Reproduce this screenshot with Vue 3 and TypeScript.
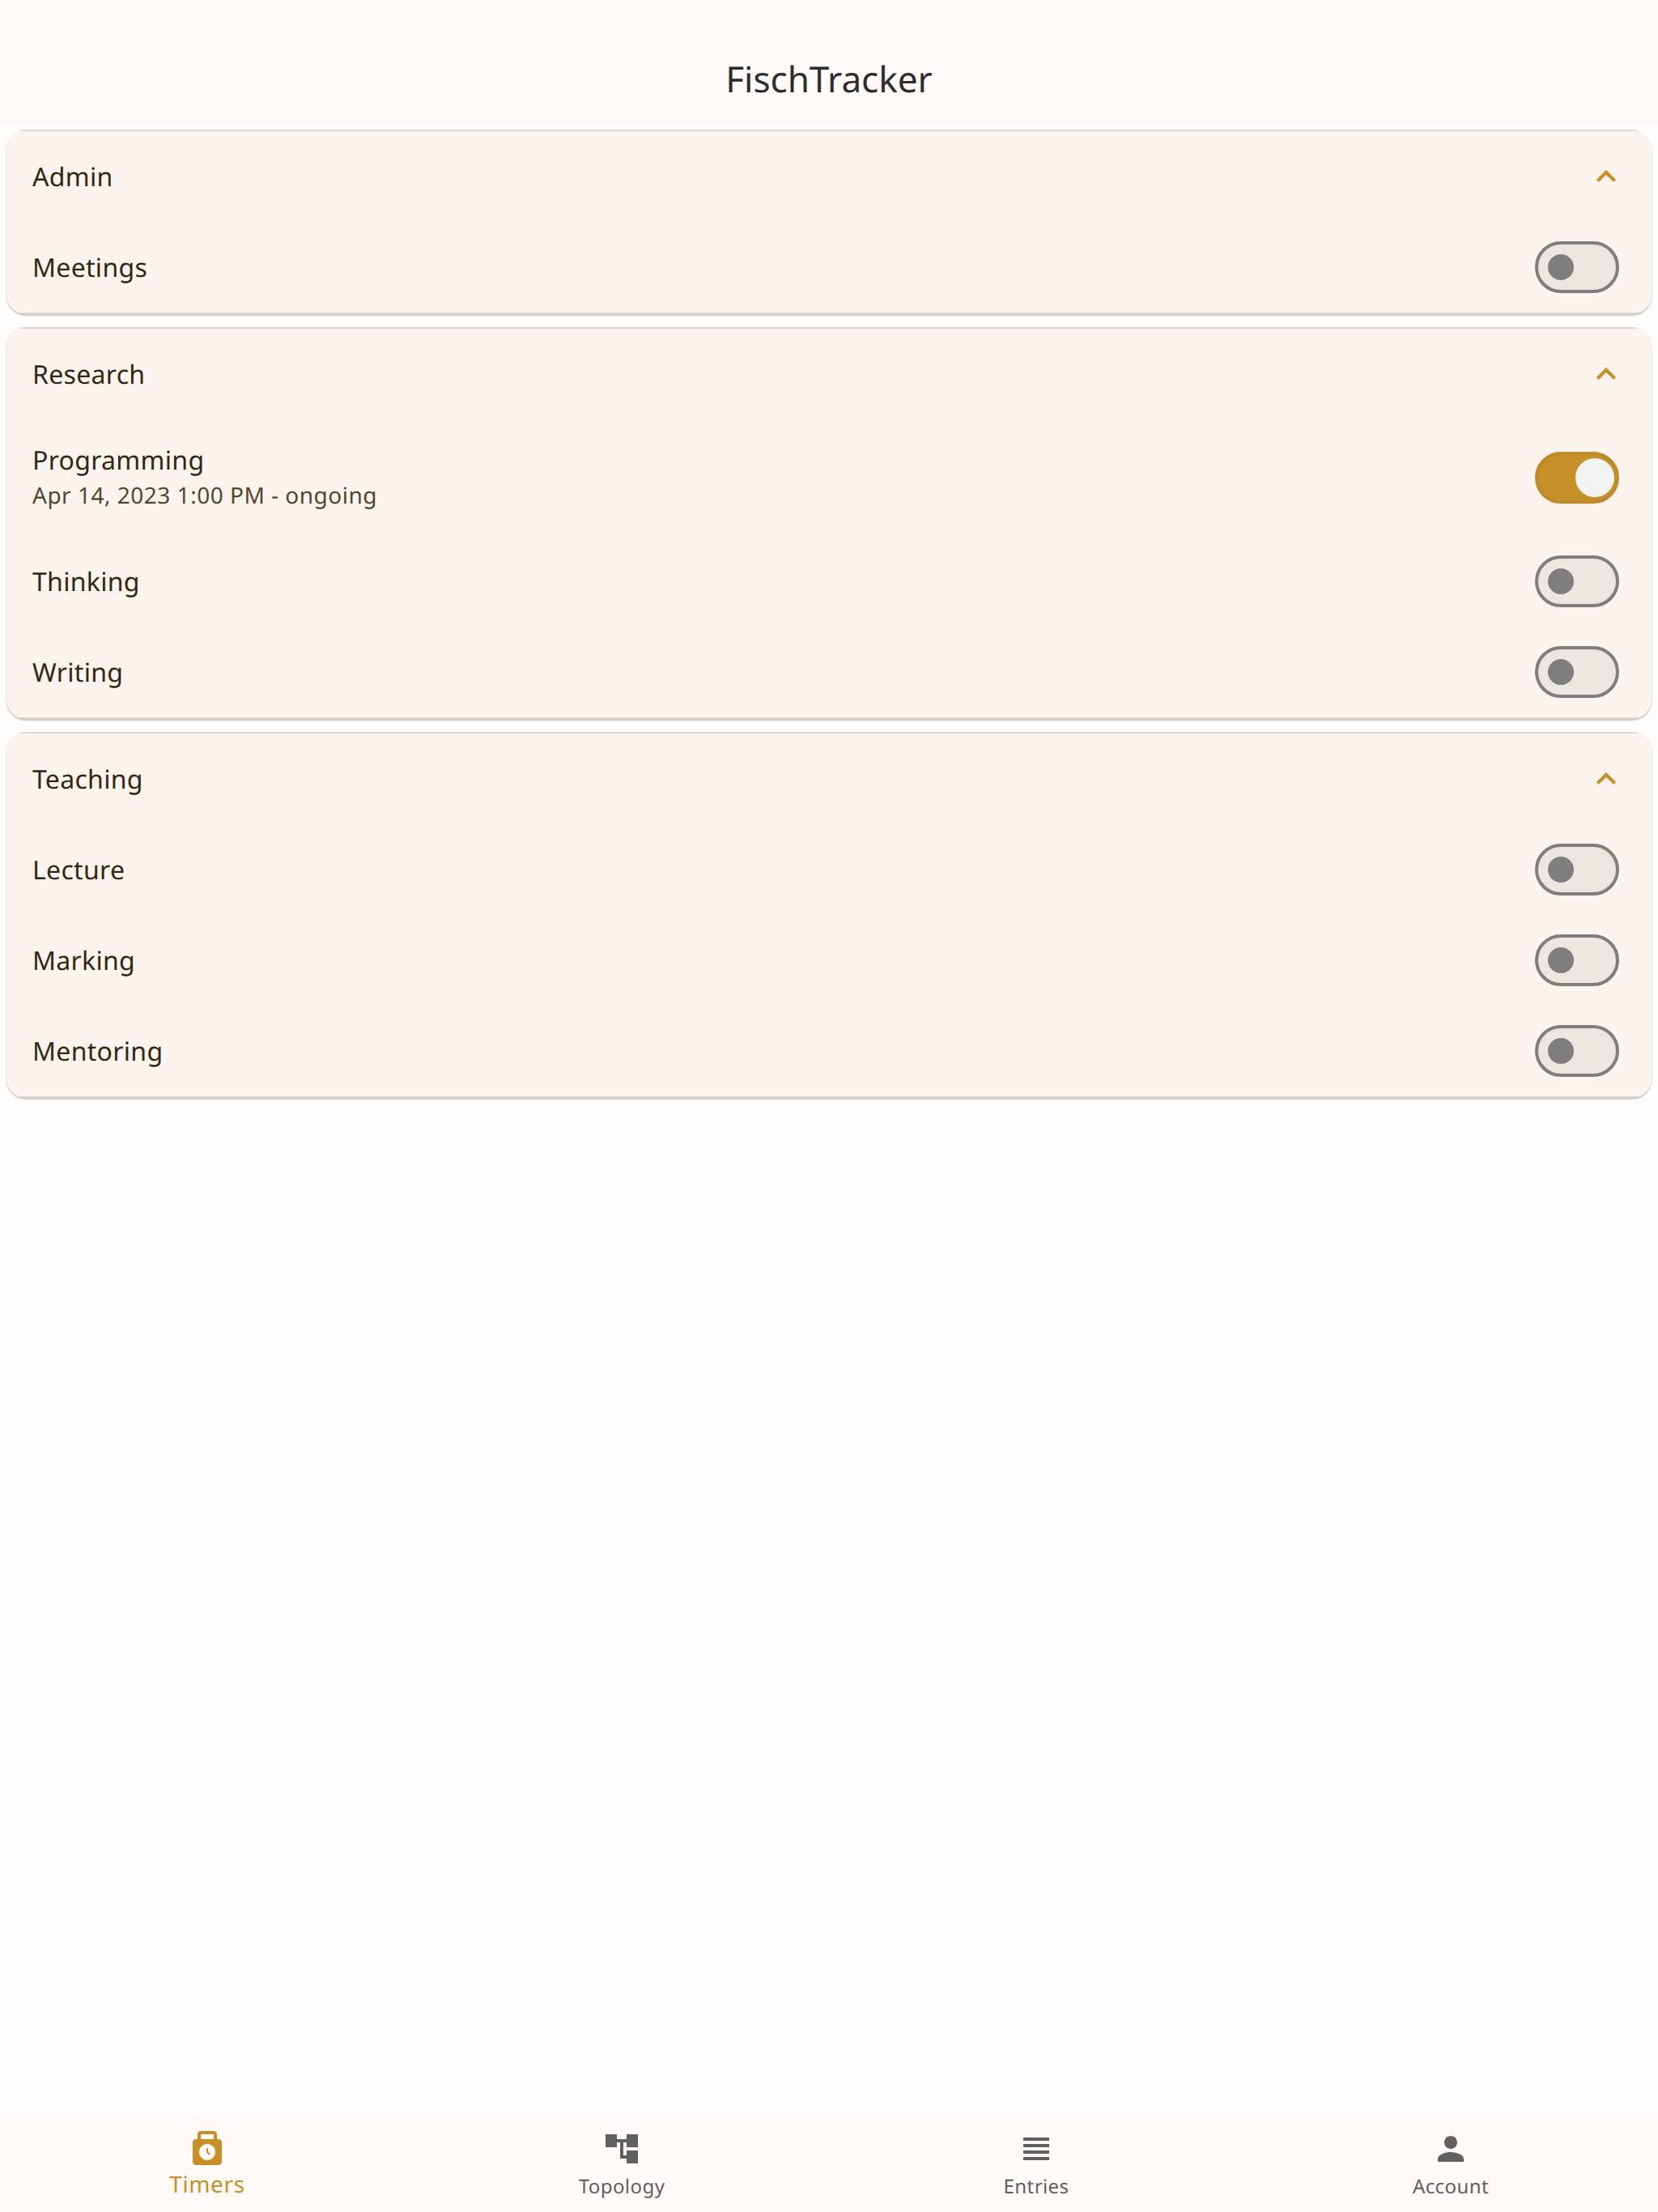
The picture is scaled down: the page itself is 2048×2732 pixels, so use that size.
<script setup lang="ts">
import { ref } from 'vue'

interface Timer {
  name: string
  running?: string
}
interface Group {
  title: string
  timers: Timer[]
}

const groups = ref<Group[]>([
  { title: 'Admin', timers: [{ name: 'Meetings' }] },
  {
    title: 'Research',
    timers: [
      { name: 'Programming', running: 'Apr 14, 2023 1:00 PM - ongoing' },
      { name: 'Thinking' },
      { name: 'Writing' },
    ],
  },
  {
    title: 'Teaching',
    timers: [{ name: 'Lecture' }, { name: 'Marking' }, { name: 'Mentoring' }],
  },
])

const tabs = [
  {
    label: 'Timers',
    icon: 'M19 6h-1V3c0-1.100-.9-2-2-2H8c-1.100 0-2 .9-2 2v3H5c-1.100 0-2 .9-2 2v12c0 1.100.9 2 2 2h14c1.100 0 2-.9 2-2V8c0-1.100-.9-2-2-2zM8 3h8v3H8V3zm4 16c-2.760 0-5-2.240-5-5s2.240-5 5-5 5 2.240 5 5-2.240 5-5 5zM12.500 11.500h-1v2.700l1.650 1.650.7-.7-1.350-1.350z',
  },
  { label: 'Topology', icon: 'M22 11V3h-7v3H9V3H2v8h7V8h2v10h4v3h7v-8h-7v3h-2V8h2v3z' },
  { label: 'Entries', icon: 'M4 15h16v-2H4v2zm0 4h16v-2H4v2zm0-8h16V9H4v2zm0-6v2h16V5H4z' },
  {
    label: 'Account',
    icon: 'M12 12c2.210 0 4-1.790 4-4s-1.790-4-4-4-4 1.790-4 4 1.790 4 4 4zm0 2c-2.670 0-8 1.340-8 4v2h16v-2c0-2.660-5.330-4-8-4z',
  },
]
const active = ref('Timers')
</script>

<template>
  <div class="screen">
    <header class="bar">
      <h1>FischTracker</h1>
    </header>
    <main class="content">
      <section v-for="g in groups" :key="g.title" class="card">
        <div class="row">
          <div class="texts">
            <span class="name">{{ g.title }}</span>
          </div>
          <svg class="chevron" viewBox="0 0 24 24">
            <path d="M12 8l-6 6 1.410 1.410L12 10.830l4.590 4.580L18 14z" />
          </svg>
        </div>
        <div v-for="t in g.timers" :key="t.name" class="row" :class="{ tall: t.running }">
          <div class="texts">
            <span class="name">{{ t.name }}</span>
            <span v-if="t.running" class="sub">{{ t.running }}</span>
          </div>
          <span class="switch" :class="{ on: t.running }"><i></i></span>
        </div>
      </section>
    </main>
    <nav class="nav">
      <div v-for="t in tabs" :key="t.label" class="tab" :class="{ active: t.label === active }">
        <svg viewBox="0 0 24 24"><path fill-rule="evenodd" :d="t.icon" /></svg>
        <span>{{ t.label }}</span>
      </div>
    </nav>
  </div>
</template>

<style>
body {
  margin: 0;
}
</style>

<style scoped>
.screen {
  display: flex;
  flex-direction: column;
  height: 100vh;
  background: #fffdfb;
  font-family: 'Noto Sans', sans-serif;
  text-rendering: geometricPrecision;
}
.bar {
  display: flex;
  box-sizing: border-box;
  height: 152px;
  padding-top: 42px;
  align-items: center;
  justify-content: center;
  background: #fffaf7;
}
h1 {
  margin: 0;
  font-size: 44px;
  font-weight: 400;
  line-height: 56px;
  color: #2d2d2c;
}
.content {
  display: flex;
  flex: 1;
  flex-direction: column;
  gap: 16px;
  padding: 8px;
}
.card {
  /* hairlines run straight and are clipped by the rounded corners */
  padding: 2px 0;
  border-radius: 24px;
  background:
    linear-gradient(#ddd5cd, #ddd5cd) top / 100% 2px no-repeat,
    linear-gradient(#ddd5cd, #ddd5cd) bottom / 100% 2px no-repeat,
    #fbf3ed;
  box-shadow: 0 2px 2px rgba(0, 0, 0, 0.19), 0 1px 3px rgba(0, 0, 0, 0.06);
}
.row {
  display: flex;
  height: 112px;
  padding: 0 40px 0 32px;
  align-items: center;
  justify-content: space-between;
}
.row.tall {
  height: 144px;
}
.texts {
  display: flex;
  flex-direction: column;
  padding-top: 2px;
}
.tall .texts {
  margin-bottom: 5px;
}
.name {
  font-size: 32px;
  line-height: 48px;
  letter-spacing: 0.3px;
  color: #322711;
}
.sub {
  margin-top: -1px;
  font-size: 28px;
  line-height: 40px;
  letter-spacing: 0.5px;
  color: #52462f;
}
.chevron {
  width: 48px;
  height: 48px;
  margin-right: -8px;
  fill: #c78f24;
  stroke: #c78f24;
  stroke-width: 0.15;
}
.switch {
  display: flex;
  box-sizing: border-box;
  width: 104px;
  height: 64px;
  padding-left: 12px;
  align-items: center;
  border: 4px solid #7e7e7e;
  border-radius: 32px;
  background: #ebe6df;
}
.switch i {
  width: 32px;
  height: 32px;
  border-radius: 50%;
  background: #7e7e7e;
}
.switch.on {
  padding: 0 2px 0 0;
  justify-content: flex-end;
  border-color: #bf8a27;
  background: #c79129;
}
.switch.on i {
  width: 48px;
  height: 48px;
  background: #f3f3f3;
}
.nav {
  display: flex;
  height: 116px;
  background: #fffaf7;
}
.tab {
  display: flex;
  flex: 1;
  flex-direction: column;
  align-items: center;
  padding-top: 14px;
  font-size: 24px;
  line-height: 36px;
  letter-spacing: 0.43px;
  color: #60605e;
}
.tab svg {
  width: 48px;
  height: 48px;
  fill: currentColor;
}
.tab span {
  margin-top: 5px;
}
.tab.active {
  font-size: 28px;
  letter-spacing: 0.6px;
  color: #c78f24;
}
.tab.active span {
  margin-top: 2px;
}
</style>
